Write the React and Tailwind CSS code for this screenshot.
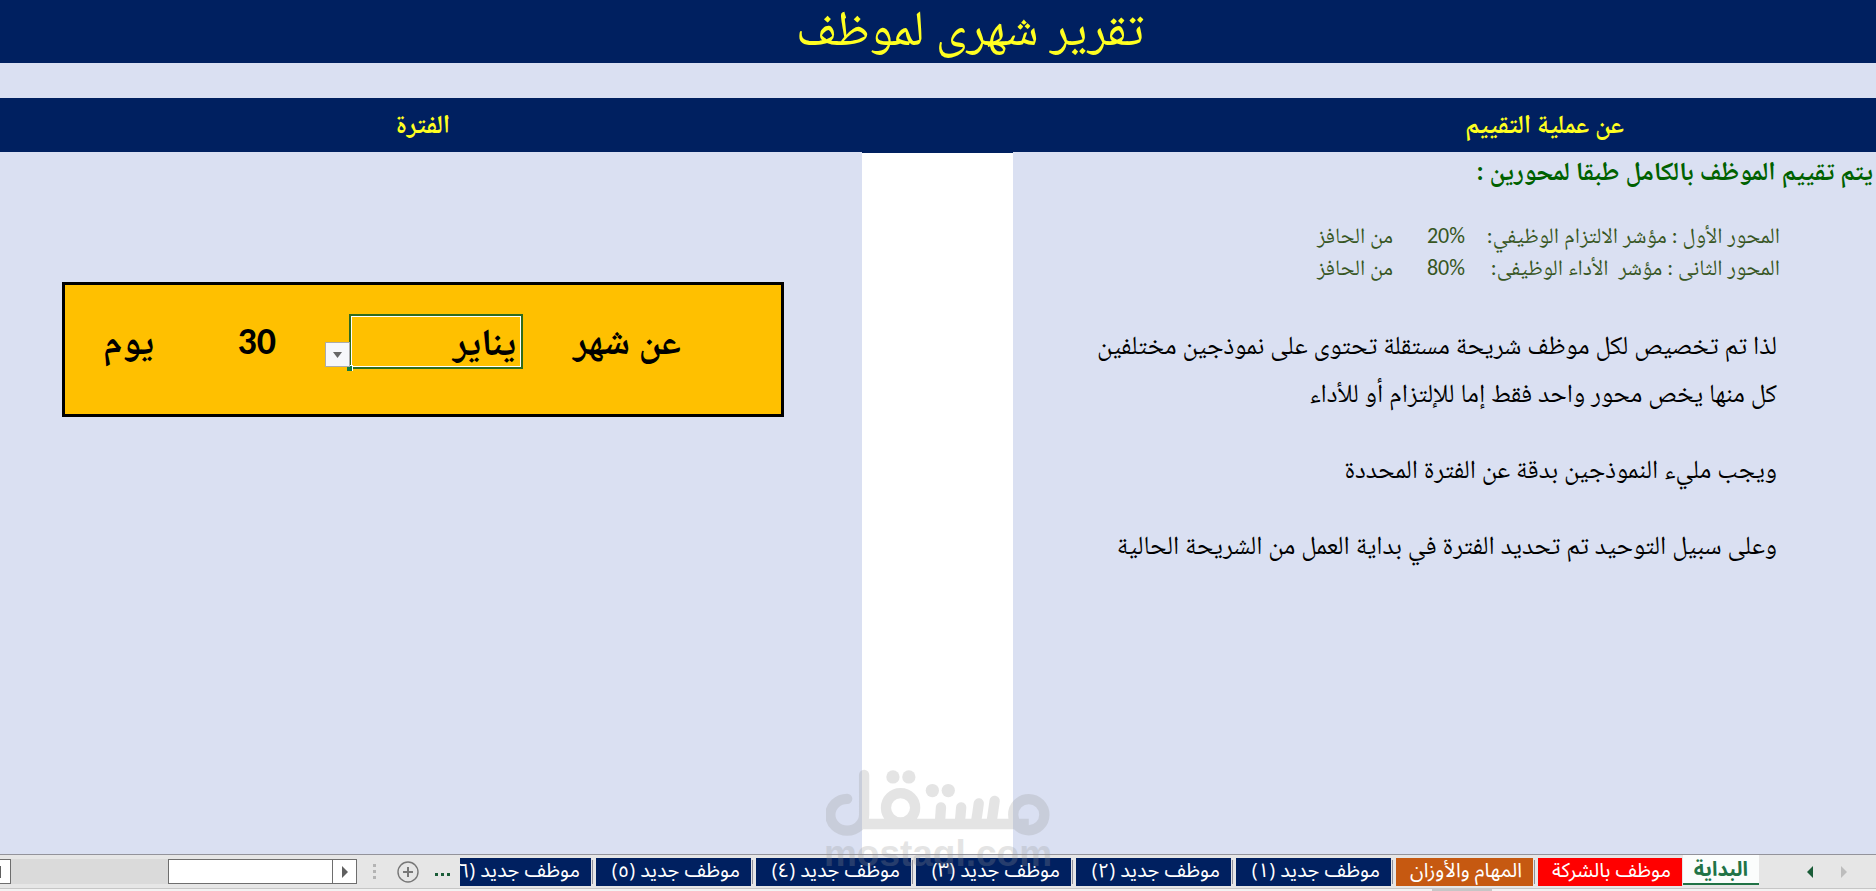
const MONTHS = [
  "يناير", "فبراير", "مارس", "أبريل", "مايو", "يونيو",
  "يوليو", "أغسطس", "سبتمبر", "أكتوبر", "نوفمبر", "ديسمبر",
];

const AXES = [
  { label: "المحور الأول : مؤشر الالتزام الوظيفي:", share: "20%" },
  { label: "المحور الثانى : مؤشر  الأداء الوظيفى:", share: "80%" },
];

const EMPLOYEE_TABS = ["١", "٢", "٣", "٤", "٥"];

function Separator() {
  return <span className="h-6 w-px shrink-0 bg-[#8f8f9a]" />;
}

function SheetTab({ className, children }) {
  return (
    <button type="button" className={`h-7 shrink-0 whitespace-nowrap pb-1 ps-[11px] text-start text-white ${className}`}>
      {children}
    </button>
  );
}

function Watermark() {
  return (
    <div className="pointer-events-none absolute bottom-5 left-1/2 z-10 flex w-56 -translate-x-1/2 flex-col items-center opacity-25" dir="ltr">
      <svg viewBox="134 54 676 204" className="w-56" fill="none" stroke="#969696" aria-hidden="true">
        <g strokeWidth="31">
          <path d="M249 72V192A51 48 0 1 1 198 144" strokeLinecap="round" />
          <path d="M244 220H746" />
          <circle cx="746" cy="192" r="47" />
          <circle cx="359" cy="171" r="44" />
          <path d="M481 170Q479 200 478 212M542 170Q540 196 538 212M595 158Q591 190 587 212M643 150Q638 186 634 212" strokeLinecap="round" />
        </g>
        <g fill="#969696" stroke="none">
          <circle cx="336" cy="78" r="20" />
          <circle cx="384" cy="78" r="20" />
          <circle cx="455" cy="119" r="20" />
          <circle cx="503" cy="119" r="20" />
        </g>
      </svg>
      <span className="font-['Liberation_Sans',sans-serif] text-[37px] font-bold leading-[34px] text-[#969696]">mostaql.com</span>
    </div>
  );
}

function InfoPanel() {
  return (
    <section className="bg-[#dae0f2]">
      <h3 className="ps-[3px] text-[26px] font-bold leading-[38px] text-[#006100]">يتم تقييم الموظف بالكامل طبقا لمحورين :</h3>
      <div className="ps-24">
        <table className="mt-[30px] text-[22px] leading-8 text-[#375623]">
          <tbody>
            {AXES.map((axis) => (
              <tr key={axis.share}>
                <th scope="row" className="w-[315px] whitespace-pre p-0 text-start font-normal">{axis.label}</th>
                <td className="w-[72px] p-0 text-start"><span dir="ltr">{axis.share}</span></td>
                <td className="p-0">من الحافز</td>
              </tr>
            ))}
          </tbody>
        </table>
        <div className="mt-[37px] ps-[3px] text-[26px] leading-[48px] text-black">
          <p>لذا تم تخصيص لكل موظف شريحة مستقلة تحتوى على نموذجين مختلفين</p>
          <p>كل منها يخص محور واحد فقط إما للإلتزام أو للأداء</p>
          <p className="mt-7">ويجب مليء النموذجين بدقة عن الفترة المحددة</p>
          <p className="mt-7">وعلى سبيل التوحيد تم تحديد الفترة في بداية العمل من الشريحة الحالية</p>
        </div>
      </div>
    </section>
  );
}

function PeriodPanel() {
  return (
    <section className="bg-[#dae0f2] pe-[62px] ps-[78px] pt-[130px]">
      <div className="flex h-[135px] items-start border-[3px] border-black bg-[#ffc000] ps-[100px] pt-[29px] text-[38px] font-bold leading-[55px] text-black">
        <label htmlFor="month" className="w-[158px] shrink-0 whitespace-nowrap">عن شهر</label>
        <div className="relative w-[174px] shrink-0 border-2 border-[#2f6b1e]">
          <select
            id="month"
            defaultValue="يناير"
            className="block h-[51px] w-full appearance-none border border-white bg-transparent ps-1 text-start font-bold leading-[48px] outline-none"
          >
            {MONTHS.map((month) => (
              <option key={month}>{month}</option>
            ))}
          </select>
          <span className="absolute -bottom-1 -left-1 size-[6px] border-r border-t border-white bg-[#107c41]" />
          <button
            type="button"
            aria-label="اختيار الشهر"
            className="absolute -left-[26px] bottom-0 flex h-[25px] w-[25px] items-center justify-center border border-[#ababab] bg-[#f6f7fa]"
          >
            <svg viewBox="0 0 9 6" className="w-[9px]" aria-hidden="true">
              <path d="M0 0h9L4.500 6z" fill="#666" />
            </svg>
          </button>
        </div>
        <span className="ms-[73px] w-[122px] shrink-0">30</span>
        <span>يوم</span>
      </div>
    </section>
  );
}

function SheetBar() {
  return (
    <footer className="flex h-[37px] shrink-0 flex-col bg-[#f3f3f3] font-['Open_Sans','Noto_Sans_Arabic','DejaVu_Sans',sans-serif] text-[20px] leading-6">
      <div className="flex h-[35px] shrink-0 items-center overflow-hidden border-b border-t border-b-[#c6c6c6] border-t-[#93939b] bg-[#e6e6e6]">
        <div className="flex w-[117px] shrink-0 items-center gap-7 ps-[29px]">
          <button type="button" aria-label="السابق">
            <svg viewBox="0 0 6 12" className="h-3" aria-hidden="true"><path d="M0 0l6 6-6 6z" fill="#bdbdbd" /></svg>
          </button>
          <button type="button" aria-label="التالي">
            <svg viewBox="0 0 6 12" className="h-3" aria-hidden="true"><path d="M6 0L0 6l6 6z" fill="#1a5c38" /></svg>
          </button>
        </div>
        <button type="button" className="mb-1 h-[30px] w-[76px] shrink-0 border-b-2 border-[#217346] bg-[#fbfdfc] ps-[11px] text-start font-bold text-[#217346]">
          البداية
        </button>
        <SheetTab className="me-[3px] ms-px w-36 bg-[#ff0000]">موظف بالشركة</SheetTab>
        <Separator />
        <SheetTab className="me-[3px] ms-px w-[137px] bg-[#c65911]">المهام والأوزان</SheetTab>
        {EMPLOYEE_TABS.map((n) => (
          <div key={n} className="flex shrink-0 items-center">
            <Separator />
            <SheetTab className="me-[3px] ms-px w-[155px] bg-[#002060]">موظف جديد ({n})</SheetTab>
          </div>
        ))}
        <Separator />
        <SheetTab className="ms-px w-[131px] overflow-hidden bg-[#002060]">موظف جديد (٦)</SheetTab>
        <button type="button" aria-label="المزيد من الأوراق" className="ms-[10px] flex shrink-0 gap-[3px] pt-[6px]">
          <span className="size-[3px] bg-[#1a5c38]" />
          <span className="size-[3px] bg-[#1a5c38]" />
          <span className="size-[3px] bg-[#1a5c38]" />
        </button>
        <button type="button" aria-label="ورقة جديدة" className="ms-4 shrink-0">
          <svg viewBox="0 0 22 22" className="size-[22px]" fill="none" stroke="#777" aria-hidden="true">
            <circle cx="11" cy="11" r="10" strokeWidth="1.4" />
            <path d="M11 6v10M6 11h10" strokeWidth="2" />
          </svg>
        </button>
        <span className="ms-[21px] flex shrink-0 flex-col gap-[3px]">
          <span className="size-[3px] bg-[#b4b4b4]" />
          <span className="size-[3px] bg-[#b4b4b4]" />
          <span className="size-[3px] bg-[#b4b4b4]" />
        </span>
        <div className="ms-4 flex h-[25px] min-w-0 flex-1 bg-[#dadada]">
          <button type="button" aria-label="تمرير لليمين" className="flex w-[25px] shrink-0 items-center justify-center border border-[#6e6e6e] bg-white">
            <svg viewBox="0 0 6 12" className="h-3" aria-hidden="true"><path d="M0 0l6 6-6 6z" fill="#606060" /></svg>
          </button>
          <div className="w-[164px] shrink-0 border border-r-0 border-[#6e6e6e] bg-white" />
          <button type="button" aria-label="تمرير لليسار" className="ms-auto flex w-[11px] items-center justify-end border border-l-0 border-[#6e6e6e] bg-white">
            <svg viewBox="0 0 1 12" className="h-3 w-px" aria-hidden="true"><path d="M0 0h1v12H0z" fill="#606060" /></svg>
          </button>
        </div>
      </div>
      <div className="ms-96 h-[2px] w-[60px] bg-[#c6c6c6]" />
    </footer>
  );
}

export default function App() {
  return (
    <div dir="rtl" lang="ar" className="relative flex min-h-screen flex-col overflow-hidden bg-[#dae0f2] font-['Carlito','Noto_Naskh_Arabic','DejaVu_Sans',sans-serif]">
      <header>
        <h1 className="h-[63px] bg-[#002060] pl-16 text-center text-[50px] leading-[56px] text-[#ffff21]">
          تقرير شهرى لموظف
        </h1>
        <div className="mt-[35px] grid h-[54px] grid-cols-[863fr_151fr_862fr] bg-[#002060] text-[26px] font-bold leading-[52px] text-[#ffff21]">
          <h2 className="ps-[252px]">عن عملية التقييم</h2>
          <h2 className="col-start-3 pe-[62px] ps-[78px] text-center">الفترة</h2>
        </div>
      </header>
      <main className="grid flex-1 grid-cols-[863fr_151fr_862fr]">
        <InfoPanel />
        <div className="border-t border-[#002060] bg-white" />
        <PeriodPanel />
      </main>
      <SheetBar />
      <Watermark />
    </div>
  );
}
